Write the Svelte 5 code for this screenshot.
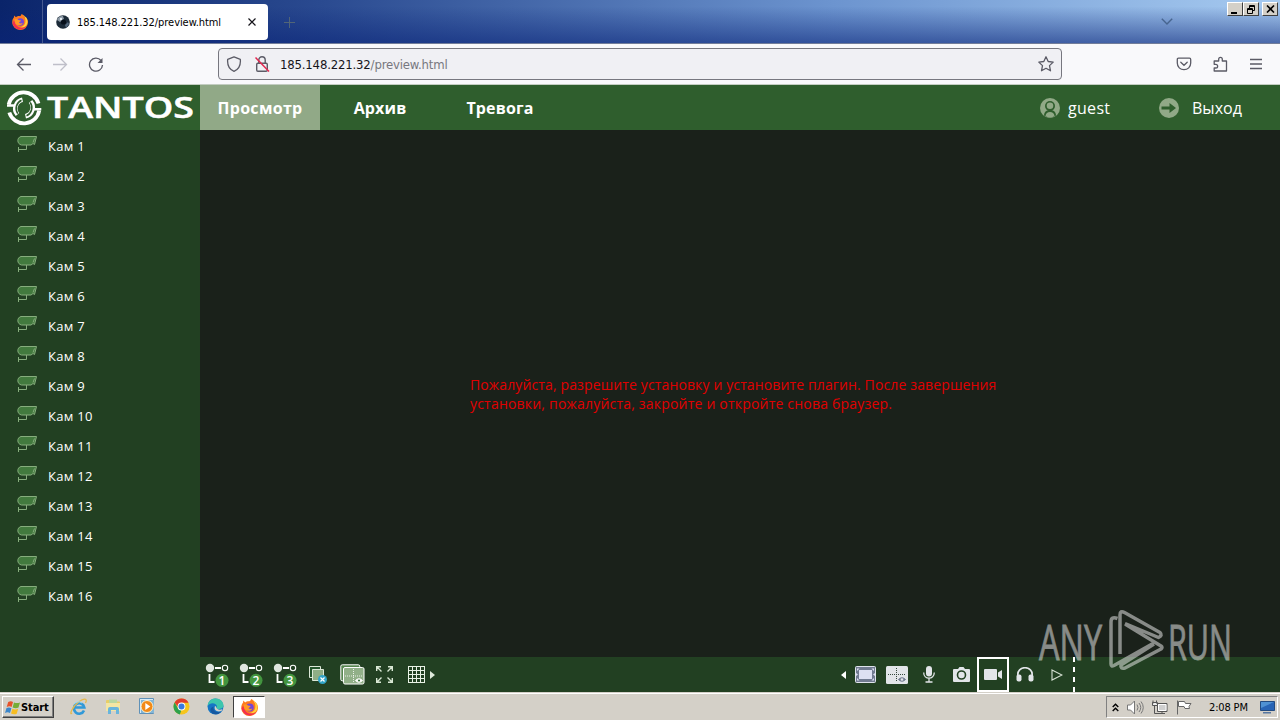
<script lang="ts">
    const cameras = Array.from({ length: 16 }, (_, i) => `Кам ${i + 1}`);
    const streams = [1, 2, 3];
    const grid = [0.5, 4.5, 8.5, 12.5, 16.5];
</script>

{#snippet firefox(size)}
    <svg width={size} height={size} viewBox="0 0 16 16">
        <path d="M8 2.2C9 1.5 9.3.8 9.6 0c2.5 1.2 3 2.500 3.300 3.500l.6-.7C15.300 4.500 16 6.300 16 8.500A7.700 7.700 0 0 1 8 16 7.700 7.700 0 0 1 .2 8.500C.2 6 1 4.200 2 3.200V1.500l2 1.700C5.500 2 7 2 8 2.200z" fill="#ff7a1f" />
        <path d="M10 .5c3 1.500 3.500 4 3.500 6.500 0 4-3 6-6 6 5 1.500 8-1.500 8-5.500 0-2-1-4-2-4.500C12.500 2 11.500 1 10 .5z" fill="#ffd43b" />
        <path d="M.5 9c1 4 4 6.500 7.500 6.500 3 0 5-1.500 6.500-3.500-4 3-9 2-11-2L2 6z" fill="#f3304f" />
        <circle cx="8.300" cy="8" r="3.700" fill="#7545d8" />
        <path d="M2.500 5.500c1.500-1 3-.5 4 .5l2.500.5c0 1-1.500 1.300-2 2 1 1.500 2.500.8 3.700.4-1 3-6.700 3.100-7.700-.4z" fill="#ff9a25" />
    </svg>
{/snippet}

<div class="screen">
    <div class="tabbar">
        <div class="pinned">{@render firefox(16)}</div>
        <div class="tab">
            <svg width="14" height="14" viewBox="0 0 14 14">
                <circle cx="7" cy="7" r="6.800" fill="#1c2b38" />
                <path d="M1 5a6 6 0 0 1 6-4l1 3-4 3z" fill="#8d9aa6" />
                <circle cx="7.500" cy="7" r="2.600" fill="#07101a" />
                <path d="M9 10l3-3 1 2-3 4z" fill="#52677c" />
                <circle cx="5" cy="4" r="1.200" fill="#e8eef4" />
            </svg>
            <span class="tab-title">185.148.221.32/preview.html</span>
            <svg width="8" height="8" viewBox="0 0 8 8" fill="none" stroke="#15141a" stroke-width="1.200"><path d="M.5.5l7 7M7.500.5l-7 7" /></svg>
        </div>
        <svg class="new-tab" width="11" height="11" viewBox="0 0 11 11" stroke="#526577" stroke-width="1"><path d="M5.500 0v11M0 5.500h11" /></svg>
        <svg class="list-tabs" width="12" height="7" viewBox="0 0 12 7" fill="none" stroke="#47658f" stroke-width="1.400"><path d="M.8.8L6 6l5.200-5.200" /></svg>
        <div class="win-buttons">
            <span><svg width="10" height="9" viewBox="0 0 10 9"><path d="M1 7h6v2H1z" /></svg></span>
            <span><svg width="10" height="9" viewBox="0 0 10 9" fill="none" stroke="#000"><path d="M3.500 3V.5h5v5H7M3 1.500h6M1.500 3.500h5v5h-5zM1 4.500h6" /></svg></span>
            <span class="close"><svg width="9" height="8" viewBox="0 0 9 8" stroke="#000" stroke-width="1.600"><path d="M1 .5l7 7M8 .5l-7 7" /></svg></span>
        </div>
    </div>

    <div class="navbar">
        <div class="history">
            <svg width="16" height="16" viewBox="0 0 16 16" fill="none" stroke="#5b5b66" stroke-width="1.300"><path d="M15 8.500H1.500M7.500 2.500l-6 6 6 6" /></svg>
            <svg width="16" height="16" viewBox="0 0 16 16" fill="none" stroke="#bfbfc9" stroke-width="1.300"><path d="M1 8.500h13.500M8.500 2.500l6 6-6 6" /></svg>
            <svg width="16" height="16" viewBox="0 0 16 16" fill="none" stroke="#5b5b66" stroke-width="1.300"><path d="M13 4.500A6.500 6.500 0 1 0 14.500 9" /><path d="M9.500 7h5V2z" fill="#5b5b66" stroke="none" /></svg>
        </div>
        <div class="urlbar">
            <svg width="16" height="16" viewBox="0 0 16 16" fill="none" stroke="#5b5b66" stroke-width="1.300"><path d="M8 .8l6.300 2.500c.5 5-1.300 10-6.300 12C3 13.300 1.200 8.300 1.700 3.300z" stroke-linejoin="round" /></svg>
            <svg class="lock" width="16" height="16" viewBox="0 0 16 16" fill="none" stroke="#5b5b66" stroke-width="1.400"><rect x="2.700" y="7.200" width="10.600" height="8" rx="1.200" /><path d="M4.800 7V4a3.200 3.200 0 0 1 6.400 0v3" /><path d="M1.500 1.500l13.500 14" stroke="#e22850" stroke-width="1.500" /></svg>
            <span class="url">185.148.221.32<span>/preview.html</span></span>
            <svg width="16" height="16" viewBox="0 0 16 16" fill="none" stroke="#5b5b66" stroke-width="1.300" stroke-linejoin="round"><path d="M8 .8l2.200 4.700 5 .6-3.700 3.500 1 5.200L8 12.300l-4.500 2.500 1-5.200L.8 6.100l5-.6z" /></svg>
        </div>
        <div class="actions">
            <svg width="16" height="16" viewBox="0 0 16 16" fill="none" stroke="#5b5b66" stroke-width="1.300" stroke-linecap="round"><path d="M2.500 2.200h11c.8 0 1.200.5 1.200 1.200V7c0 4-3 6.700-6.700 6.700S1.300 11 1.300 7V3.400c0-.7.4-1.200 1.200-1.200z" /><path d="M4.800 6.300L8 9.300l3.200-3" /></svg>
            <svg width="16" height="16" viewBox="0 0 16 16" fill="none" stroke="#5b5b66" stroke-width="1.300" stroke-linejoin="round"><path d="M2.200 8.300V5h4.500V3.300c0-2.600 3.600-2.600 3.600 0V5h4.200v10H2.200v-3h1.500c2.600 0 2.600-3.700 0-3.700z" /></svg>
            <svg width="16" height="16" viewBox="0 0 16 16" stroke="#5b5b66" stroke-width="1.300"><path d="M2 3.500h12M2 8h12M2 12.500h12" /></svg>
        </div>
    </div>

    <header>
        <div class="logo">
            <svg width="200" height="45" viewBox="0 0 200 45" fill="none" stroke="#fff">
                <path d="M8.700 19.500A15.400 15.400 0 0 1 38.500 18.500" stroke-width="3.800" />
                <path d="M9.300 27.500A15.400 15.400 0 0 0 39.200 25.500" stroke-width="3.800" />
                <path d="M7 20.500h7.500M33.500 24.300h7.800" stroke-width="2.400" />
                <path d="M17.500 29.500A9 9 0 0 1 22.500 14.800M30.500 16.500A9 9 0 0 1 25.500 31.200" stroke-width="4.600" />
                <path d="M17.800 28.600A9 9 0 0 1 21.500 15.200M30.200 17.400A9 9 0 0 1 26.500 30.800" stroke="#2f5e2d" stroke-width="1.600" />
                <text x="47" y="33" textLength="147" lengthAdjust="spacingAndGlyphs" fill="#fff" stroke="none">TANTOS</text>
            </svg>
        </div>
        <nav>
            <a class="active" href="#preview">Просмотр</a>
            <a href="#archive">Архив</a>
            <a href="#alarm">Тревога</a>
        </nav>
        <div class="user">
            <svg width="20" height="20" viewBox="0 0 20 20"><circle cx="10" cy="10" r="10" fill="#91a987" /><path d="M4 17.500c.3-4 2.500-5.500 6-5.500s5.700 1.500 6 5.500q-6 4-12 0z" fill="#2f5e2d" /><circle cx="10" cy="8" r="5" fill="#2f5e2d" /><circle cx="10" cy="7.800" r="3.300" fill="#91a987" /><path d="M5.500 18c.3-2.700 2-4 4.500-4s4.200 1.300 4.500 4q-4.500 3-9 0z" fill="#91a987" /></svg>
            <span>guest</span>
        </div>
        <div class="logout">
            <svg width="20" height="20" viewBox="0 0 20 20"><circle cx="10" cy="10" r="10" fill="#91a987" /><path d="M2.500 8.400h8V5l6.500 5-6.500 5v-3.400h-8z" fill="#2f5e2d" /></svg>
            <span>Выход</span>
        </div>
    </header>

    <main>
        <aside>
            <ul>
                {#each cameras as camera}
                    <li>
                        <svg width="20" height="17" viewBox="0 0 20 17" fill="none" stroke="#86ad7d">
                            <path d="M4 1.500H19.500L17.500 9.500 16 8.500 14 10H4.500C-.3 9-.3 2.500 4 1.500z" fill="#427a3e" />
                            <path d="M17.500 3.500l-1.500 4M9.500 10v4.500H1.500M1.500 12v5" />
                        </svg>
                        <span>{camera}</span>
                    </li>
                {/each}
            </ul>
        </aside>
        <section class="viewer">
            <div class="video">
                <p>Пожалуйста, разрешите установку и установите плагин. После завершения<br /><span>установки, пожалуйста, закройте и откройте снова браузер.</span></p>
            </div>
            <div class="toolbar">
                {#each streams as n}
                    <div class="tool stream">
                        <svg width="24" height="24" viewBox="0 0 24 24">
                            <circle cx="5" cy="5" r="4.200" fill="#dfe6df" />
                            <path d="M10 5h6M4.500 11v8h5" fill="none" stroke="#fff" stroke-width="1.800" />
                            <circle cx="20" cy="5" r="2.700" fill="none" stroke="#fff" stroke-width="1.100" />
                            <circle cx="17" cy="17.300" r="6.500" fill="#43953f" />
                            <text x="17" y="21.500" text-anchor="middle">{n}</text>
                        </svg>
                    </div>
                {/each}
                <div class="tool">
                    <svg width="18" height="18" viewBox="0 0 18 18"><path d="M.5.5h11v11H.5z" fill="#24552c" stroke="#dce8d8" /><path d="M3.500 3.500h11v11h-11z" fill="#8fae86" stroke="#dce8d8" /><circle cx="13.500" cy="13.500" r="4.500" fill="#32a4c8" /><path d="M11.500 11.500l4 4m0-4l-4 4" stroke="#fff" stroke-width="1.200" /></svg>
                </div>
                <div class="tool wide">
                    <svg width="25" height="21" viewBox="0 0 25 21" fill="none" stroke="#fff"><rect x=".8" y=".8" width="19" height="16" rx="1.500" fill="#578650" /><rect x="3.500" y="3.500" width="20.500" height="16.500" rx="1.500" fill="#91b088" /><path d="M13.500 5v13M5 12h17" stroke-dasharray="1 1" stroke-opacity=".8" /><path d="M15.500 16.500q3.500-3.500 7 0-3.500 3.500-7 0z" fill="#fff" /><circle cx="19" cy="16.500" r="1.100" fill="#397237" stroke="none" /></svg>
                </div>
                <div class="tool narrow">
                    <svg width="17" height="17" viewBox="0 0 17 17" fill="none" stroke="#d9e8d5" stroke-width="1.400"><path d="M.7 5V.7H5M1 1l4.500 4.500M12 .7h4.300V5M16 1l-4.500 4.500M.7 12v4.300H5M1 16l4.500-4.500M12 16.300h4.300V12M16 16l-4.500-4.500" /></svg>
                </div>
                <div class="tool grid">
                    <svg width="17" height="17" viewBox="0 0 17 17" stroke="#e9f2e6">{#each grid as p}<path d="M{p} 0v17M0 {p}h17" />{/each}</svg>
                    <svg width="5" height="8" viewBox="0 0 5 8" fill="#dfe9dc"><path d="M0 0l5 4-5 4z" /></svg>
                </div>
                <div class="right-tools">
                    <svg width="6" height="8" viewBox="0 0 6 8" fill="#fff"><path d="M5 0L0 4l5 4z" /></svg>
                    <div class="cell">
                        <svg width="21" height="17" viewBox="0 0 21 17"><rect x=".5" y=".5" width="20" height="16" rx="1" fill="#717b91" stroke="#dfe3ec" /><path d="M4 4h13v9H4z" fill="#dde0f2" /><path d="M2 2.500h2.500L2 5zM19 2.500h-2.500L19 5zM2 14.500h2.500L2 12zM19 14.500h-2.500L19 12zM1 7l2 1.500L1 10zM20 7l-2 1.500L20 10z" fill="#dde0f2" /></svg>
                    </div>
                    <div class="cell">
                        <svg width="22" height="18" viewBox="0 0 22 18" fill="none" stroke="#35483d"><rect width="22" height="18" rx="1.500" fill="#e2e5e9" stroke="none" /><path d="M10.500 2v14M2 8.500h18" stroke-dasharray="1 1" /><path d="M12.500 13.500q3.500-3.500 7 0-3.500 3.500-7 0z" fill="#717b91" stroke="#717b91" /><circle cx="16" cy="13.500" r="1.300" fill="#e2e5e9" stroke="none" /></svg>
                    </div>
                    <div class="cell">
                        <svg width="12" height="17" viewBox="0 0 12 17" fill="none" stroke="#e2e5e9" stroke-width="1.300"><rect x="3" y="0" width="6" height="10.500" rx="3" fill="#e2e5e9" stroke="none" /><path d="M.7 6.500C.7 14 11.300 14 11.300 6.500M6 12v4M2.500 16h7" /></svg>
                    </div>
                    <div class="cell">
                        <svg width="17" height="15" viewBox="0 0 17 15"><path d="M1 2h4l1.500-2h4L12 2h4q1 0 1 1v11q0 1-1 1H1q-1 0-1-1V3q0-1 1-1z" fill="#e2e5e9" /><circle cx="8.500" cy="8" r="4" fill="#e2e5e9" stroke="#224022" stroke-width="1.600" /></svg>
                    </div>
                    <div class="cell selected">
                        <svg width="18" height="11" viewBox="0 0 18 11" fill="#e2e5e9"><rect width="13" height="11" rx="1" /><path d="M14 3.500L18 1v9l-4-2.500z" /></svg>
                    </div>
                    <div class="cell">
                        <svg width="18" height="15" viewBox="0 0 18 15" fill="#e2e5e9"><path d="M2 9C0-2 18-2 16 9" fill="none" stroke="#e2e5e9" stroke-width="1.700" /><rect x=".5" y="7.500" width="5" height="7" rx="2" /><rect x="12.500" y="7.500" width="5" height="7" rx="2" /></svg>
                    </div>
                    <div class="cell">
                        <svg width="12" height="12" viewBox="0 0 12 12" fill="none" stroke="#d8e2d5" stroke-width="1.100"><path d="M1 1l10 5-10 5z" /></svg>
                    </div>
                    <div class="dash"></div>
                </div>
            </div>
        </section>
    </main>

    <footer>
        <button class="start">
            <svg width="16" height="15" viewBox="0 0 16 15"><path d="M3.200 2Q6 .5 8 2L6.600 7Q4.500 5.700 1.700 7z" fill="#e7522a" /><path d="M9 2.500q3 1.200 6 0l-1.500 5Q11 9 7.600 7.500z" fill="#76ad36" /><path d="M1.500 8Q4.300 6.800 6.400 8.200L5 13Q2.500 11.700 0 13z" fill="#3b86cb" /><path d="M7.400 8.700q3 1.400 5.800 0l-1.500 5q-2.700 1.200-5.700-.2z" fill="#f7bd22" /></svg>
            <span>Start</span>
        </button>
        <div class="launch">
            <svg width="18" height="18" viewBox="0 0 18 18" fill="none"><path d="M14 12.500A5.200 5.200 0 1 1 14.300 9.500H5" stroke="#3199d8" stroke-width="2.600" /><path d="M2 15C-1 18 2 9 8 4.500S18 0 15.500 5" stroke="#e5b94c" stroke-width="1.300" /><path d="M4 6q4-4 8-1" stroke="#9cdbf5" stroke-width="1" /></svg>
            <svg width="17" height="17" viewBox="0 0 17 17"><path d="M1 3q0-1 1-1h4l1.500 1.500H14q1 0 1 1V13H1z" fill="#e8ce67" /><path d="M4 1.500h8v4H4z" fill="#b9d7a0" /><path d="M1 5h14v8H1z" fill="#f4e6a3" /><path d="M3 16v-5q0-2 2-2h7q2 0 2 2v5h-3v-4H6v4z" fill="#69b5dc" /></svg>
            <svg width="17" height="17" viewBox="0 0 17 17"><path d="M.5.5h14v15H.5z" fill="#d9ebf5" stroke="#5f91b8" /><path d="M2 2h13v13H2z" fill="#83b6d7" /><circle cx="8" cy="8.500" r="6" fill="#f28a17" stroke="#fff3d0" /><path d="M6.300 5l5 3.500-5 3.500z" fill="#fff" /></svg>
            <svg width="17" height="17" viewBox="0 0 17 17"><circle cx="8.500" cy="8.500" r="8" fill="#f6c51b" /><path d="M1.600 4.500A8 8 0 0 1 15.500 4.700H8.500L6 10z" fill="#e23c2e" /><path d="M1.600 4.500l3.700 6.300 3 1.700-1.500 3.900A8 8 0 0 1 1.600 4.500z" fill="#2da14c" /><circle cx="8.500" cy="8.500" r="3.900" fill="#fff" /><circle cx="8.500" cy="8.500" r="3" fill="#3979df" /></svg>
            <svg width="17" height="17" viewBox="0 0 17 17"><circle cx="8.500" cy="8.500" r="8" fill="#1676c5" /><path d="M.7 8C1 3 4.500.5 8.500.5c5 0 8 3.500 8 7C16.500 10 14 11 11.500 11 9 11 9 9.500 10 8.500 10 5 3 3.500.7 8z" fill="#3dc6ad" /><path d="M6.500 8.500C5.500 13 10 15 14 13.500c-2 3-6 3.500-8.500 2S2 10 6.500 8.500z" fill="#1658a0" /><path d="M9 8.500c0 3 4 4 6.500 2.500L14.500 13C10 14.500 6.500 12 8 8z" fill="#d4d0c8" /></svg>
        </div>
        <div class="task">{@render firefox(17)}</div>
        <div class="tray">
            <svg width="7" height="9" viewBox="0 0 7 9" fill="none" stroke="#000" stroke-width="1.400"><path d="M.7 4L3.500 1.200 6.300 4M.7 8L3.500 5.200 6.300 8" /></svg>
            <svg width="17" height="15" viewBox="0 0 17 15" fill="none" stroke="#777"><path d="M.5 5H3.500L7.500 1v13L3.500 10H.5z" fill="#fff" /><path d="M10 4.500q2 3 0 6M12 3q3.500 4.500 0 9M14 1.500q4.500 6 0 12" /></svg>
            <svg width="16" height="15" viewBox="0 0 16 15" fill="none" stroke="#555"><path d="M5.500 3.500h9.500v8H5.500z" fill="#cfcfcf" /><path d="M6.500 4.500H14v6H6.500z" stroke="#fff" /><path d="M1 .5v3M4.500 .5v3M.5 2.500h5v3h-5z" fill="#eee" /><path d="M2.500 6v7.500H13M10 11.500V13" /></svg>
            <svg width="16" height="15" viewBox="0 0 16 15" fill="#fff" stroke="#666"><path d="M1.500.5v14M2.500 1.500h6l1 2H15l-2 3 .5 2H9l-1-2H2.500z" /></svg>
            <span class="clock">2:08 PM</span>
            <svg width="15" height="13" viewBox="0 0 15 13"><path d="M.5.500h14v9H.5z" fill="#2864b5" stroke="#234b81" /><path d="M1 1h13L1 7z" fill="#4f91d3" /><path d="M3 11h8v1.500H3z" fill="#5676a0" /></svg>
        </div>
    </footer>

    <div class="watermark">
        <svg width="204" height="66" viewBox="0 0 204 66" fill="none" stroke="#fff">
            <text x="1" y="51.500" textLength="63" lengthAdjust="spacingAndGlyphs">ANY</text>
            <path d="M80.500 10.500Q74 8 74 14v42q0 3 3 1.500L116 35.500M83 46V7q0-5 4.500-2.500L123 24.500q3 3-1.500 5L88 15.500M88 16l36 22q2 1.500 0 3L88 60q-5 1-4-3L117 36" transform="translate(-1)" stroke-width="3.500" stroke-linejoin="round" />
            <text x="130" y="51.500" textLength="64" lengthAdjust="spacingAndGlyphs">RUN</text>
        </svg>
    </div>
</div>

<style>
    :global(body) {
        overflow: hidden;
    }

    .screen {
        position: relative;
        display: flex;
        flex-direction: column;
        width: 1280px;
        height: 720px;
        font-family: "Open Sans", "Noto Sans", sans-serif;
    }

    svg {
        display: block;
        flex: none;
    }

    .tabbar {
        display: flex;
        box-sizing: border-box;
        height: 44px;
        border-bottom: 1px solid #727d99;
        background: linear-gradient(to bottom, rgba(10, 36, 106, 0) 15%, rgba(10, 36, 120, .58) 100%), linear-gradient(to right, #0a246a, #2a4a90 25%, #6c94cf 65%, #a6caf0);
    }

    .pinned {
        box-sizing: border-box;
        width: 43px;
        padding: 14px 0 0 12px;
        border-right: 1px solid #465a91;
    }

    .tab {
        display: flex;
        align-items: center;
        box-sizing: border-box;
        width: 221px;
        height: 36px;
        margin: 4px 0 0 4px;
        padding: 0 12px 0 9px;
        border-radius: 4px;
        background: #fff;
    }

    .tab-title {
        flex: 1;
        margin: 1px 0 0 7px;
        font: 11px "DejaVu Sans Condensed", "DejaVu Sans", sans-serif;
        font-stretch: condensed;
        letter-spacing: -.06px;
        white-space: nowrap;
        color: #000;
    }

    .new-tab {
        margin: 17px 0 0 16px;
    }

    .list-tabs {
        margin: 18px 0 0 auto;
    }

    .win-buttons {
        display: flex;
        margin: 2px 2px 0 54px;
    }

    .win-buttons span {
        display: grid;
        place-items: center;
        box-sizing: border-box;
        width: 16px;
        height: 14px;
        border: 1px solid;
        border-color: #fff #404040 #404040 #fff;
        background: #d4d0c8;
    }

    .win-buttons .close {
        margin-left: 3px;
    }

    .navbar {
        display: flex;
        align-items: center;
        box-sizing: border-box;
        height: 41px;
        border-bottom: 1px solid #c3cdc1;
        background: #f9f9fb;
    }

    .history {
        display: flex;
        gap: 20px;
        width: 202px;
        padding-left: 16px;
    }

    .urlbar {
        display: flex;
        align-items: center;
        box-sizing: border-box;
        width: 844px;
        height: 32px;
        padding: 0 7px;
        border: 1px solid #77777f;
        border-radius: 4px;
        background: #f0f0f4;
    }

    .lock {
        margin: 0 10px 0 12px;
    }

    .url {
        flex: 1;
        font: 13px "DejaVu Sans Condensed", "DejaVu Sans", sans-serif;
        font-stretch: condensed;
        letter-spacing: -.17px;
        color: #15141a;
    }

    .url span {
        color: #77777f;
    }

    .actions {
        display: flex;
        gap: 20px;
        margin: 0 16px 0 auto;
    }

    header {
        display: flex;
        height: 45px;
        background: #2f5e2d;
        color: #fff;
    }

    .logo {
        width: 200px;
    }

    .logo text {
        font: 600 29px "Open Sans", sans-serif;
        stroke: #fff;
        stroke-width: .5px;
    }

    nav {
        display: flex;
    }

    nav a {
        display: grid;
        place-items: center;
        width: 120px;
        padding-top: 1px;
        box-sizing: border-box;
        font-size: 16px;
        font-weight: 700;
        letter-spacing: .15px;
        color: #fff;
        text-decoration: none;
    }

    nav .active {
        background: #91a987;
        letter-spacing: .3px;
    }

    .user,
    .logout {
        display: flex;
        align-items: center;
        font-size: 16px;
    }

    .user {
        gap: 8px;
        margin-left: auto;
        width: 119px;
        letter-spacing: .3px;
    }

    .logout {
        gap: 13px;
        width: 121px;
    }

    main {
        display: flex;
        height: 562px;
    }

    aside {
        width: 200px;
        background: #224022;
    }

    ul {
        margin: 0;
        padding: 0;
        list-style: none;
    }

    li {
        display: flex;
        gap: 11px;
        height: 30px;
        padding-left: 17px;
        font-size: 13px;
        line-height: 32px;
        letter-spacing: .3px;
        color: #fff;
    }

    li svg {
        margin-top: 5px;
    }

    .viewer {
        display: flex;
        flex-direction: column;
        flex: 1;
    }

    .video {
        display: flex;
        justify-content: center;
        height: 527px;
        background: #1a211a;
    }

    .video p {
        width: 540px;
        margin: 245px 0 0;
        font-size: 14px;
        line-height: 19px;
        letter-spacing: .13px;
        color: #e00000;
        white-space: nowrap;
    }

    .video p span {
        letter-spacing: .2px;
    }

    .toolbar {
        display: flex;
        height: 35px;
        background: #224022;
    }

    .tool {
        display: grid;
        place-items: center;
        width: 32px;
    }

    .tool.stream {
        width: 34px;
    }

    .stream text {
        font: 600 12px "Open Sans", sans-serif;
        fill: #fff;
    }

    .tool.wide {
        width: 36px;
    }

    .tool.narrow {
        width: 29px;
    }

    .tool.grid {
        display: flex;
        align-items: center;
        gap: 5px;
        margin-left: 9px;
    }

    .right-tools {
        display: flex;
        align-items: center;
        margin: 0 205px 0 auto;
    }

    .cell {
        display: grid;
        place-items: center;
        box-sizing: border-box;
        width: 32px;
        height: 35px;
    }

    .right-tools > svg {
        margin-right: 2px;
    }

    .selected {
        border: 2px solid #fff;
    }

    .dash {
        width: 2px;
        height: 35px;
        background: repeating-linear-gradient(to bottom, #fff 0 5px, transparent 5px 10px);
    }

    footer {
        display: flex;
        align-items: center;
        box-sizing: border-box;
        height: 28px;
        padding: 1px 2px 0;
        border-top: 1px solid #d4d0c8;
        box-shadow: inset 0 1px #fff;
        background: #d4d0c8;
    }

    .start {
        display: flex;
        align-items: center;
        width: 52px;
        height: 22px;
        padding: 0 2px;
        border: 1px solid;
        border-color: #fff #404040 #404040 #fff;
        box-shadow: inset -1px -1px #808080;
        background: #d4d0c8;
        color: #000;
        font: bold 11px "DejaVu Sans Condensed", "DejaVu Sans", sans-serif;
        font-stretch: condensed;
        letter-spacing: -.1px;
    }

    .launch {
        display: flex;
        gap: 17px;
        margin-left: 16px;
    }

    .task {
        display: grid;
        place-items: center;
        box-sizing: border-box;
        width: 32px;
        height: 22px;
        margin-left: 9px;
        border: 1px solid;
        border-color: #404040 #fff #fff #404040;
        background: #fff;
    }

    .tray {
        display: flex;
        align-items: center;
        box-sizing: border-box;
        width: 172px;
        height: 22px;
        margin-left: auto;
        padding-left: 5px;
        gap: 8px;
        border: 1px solid;
        border-color: #808080 #fff #fff #808080;
    }

    .clock {
        width: 43px;
        margin-left: 9px;
        font: 11px "DejaVu Sans Condensed", "DejaVu Sans", sans-serif;
        font-stretch: condensed;
        letter-spacing: -.15px;
        white-space: nowrap;
        color: #000;
    }

    .watermark {
        position: absolute;
        left: 1038px;
        top: 608px;
        opacity: .48;
    }

    .watermark text {
        font: 49px "Open Sans", sans-serif;
        fill: #fff;
        stroke: #fff;
        stroke-width: .8px;
    }
</style>
